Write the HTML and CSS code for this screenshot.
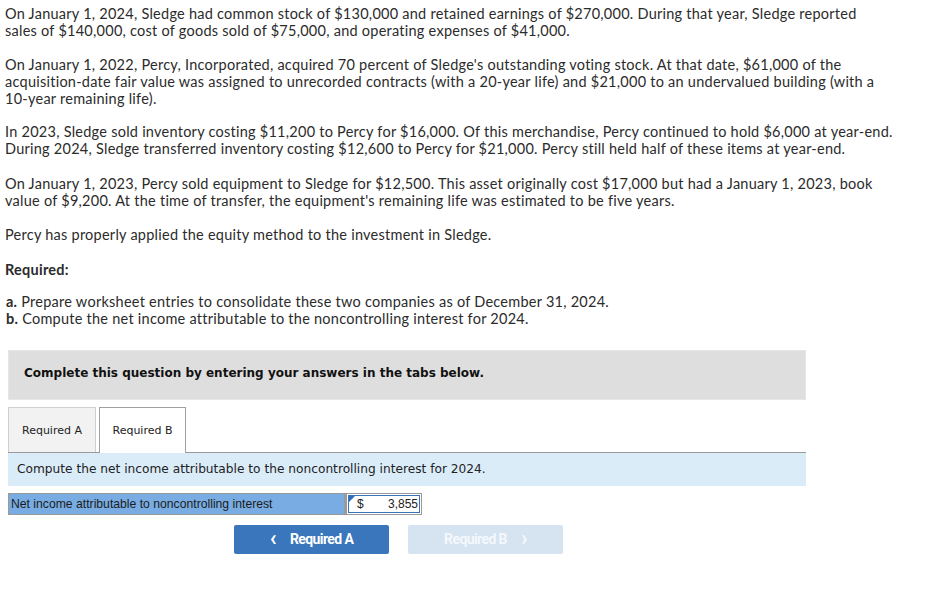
FILE: index.html
```html
<!DOCTYPE html>
<html>
<head>
<meta charset="utf-8">
<link rel="stylesheet" href="styles.css">
</head>
<body>
<div class="page">
  <p class="para p1">On January 1, 2024, Sledge had common stock of $130,000 and retained earnings of $270,000. During that year, Sledge reported<br>sales of $140,000, cost of goods sold of $75,000, and operating expenses of $41,000.</p>
  <p class="para p2">On January 1, 2022, Percy, Incorporated, acquired 70 percent of Sledge's outstanding voting stock. At that date, $61,000 of the acquisition-date fair value was assigned to unrecorded contracts (with a 20-year life) and $21,000 to an undervalued building (with a 10-year remaining life).</p>
  <p class="para p3">In 2023, Sledge sold inventory costing $11,200 to Percy for $16,000. Of this merchandise, Percy continued to hold $6,000 at year&#8209;end. During 2024, Sledge transferred inventory costing $12,600 to Percy for $21,000. Percy still held half of these items at year-end.</p>
  <p class="para p4">On January 1, 2023, Percy sold equipment to Sledge for $12,500. This asset originally cost $17,000 but had a January 1, 2023, book value of $9,200. At the time of transfer, the equipment's remaining life was estimated to be five years.</p>
  <p class="para p5">Percy has properly applied the equity method to the investment in Sledge.</p>
  <p class="para req-title">Required:</p>
  <div class="req-list">
    <div class="req-item"><b>a.</b> Prepare worksheet entries to consolidate these two companies as of December 31, 2024.</div>
    <div class="req-item"><b>b.</b> Compute the net income attributable to the noncontrolling interest for 2024.</div>
  </div>

  <div class="panel">
    <div class="notice">Complete this question by entering your answers in the tabs below.</div>
    <div class="tabs">
      <div class="tab">Required A</div>
      <div class="tab active">Required B</div>
    </div>
    <div class="instr">Compute the net income attributable to the noncontrolling interest for 2024.</div>
    <div class="answer-row">
      <div class="answer-label">Net income attributable to noncontrolling interest</div>
      <div class="answer-input">
        <span class="corner"></span>
        <span class="cur">$</span>
        <span class="val">3,855</span>
      </div>
    </div>
    <div class="nav">
      <div class="nav-btn prev"><span class="chev">&lsaquo;</span>Required A</div>
      <div class="nav-btn next disabled">Required B<span class="chev">&rsaquo;</span></div>
    </div>
  </div>
</div>
</body>
</html>
```

FILE: styles.css
```css
html, body {
  margin: 0;
  padding: 0;
  background: #ffffff;
}

.page {
  padding: 5px 0 0 5px;
  width: 888px;
  font-family: "Lato", "Open Sans", sans-serif;
  font-size: 14.5px;
  letter-spacing: 0.25px;
  line-height: 17px;
  color: #2b2b2b;
}

.para {
  margin: 0;
}
.p2 { margin-top: 17px; }
.p3 { margin-top: 16px; }
.p4 { margin-top: 18px; }
.p5 { margin-top: 17px; }
.req-title {
  margin-top: 18px;
  font-weight: bold;
}

.req-list {
  margin-top: 15px;
  padding-left: 1px;
}
.req-item b {
  font-weight: bold;
}

.panel {
  margin: 23px 0 0 3px;
  width: 798px;
  letter-spacing: normal;
}

.notice {
  background: #dedede;
  border: 1px solid #e6e6e6;
  display: flex;
  align-items: center;
  padding: 0 0 4px 15px;
  box-sizing: content-box;
  height: 44px;
  font-family: "DejaVu Sans", Verdana, sans-serif;
  font-weight: bold;
  font-size: 12px;
  color: #111;
}

.tabs {
  display: flex;
  gap: 3px;
  margin-top: 7px;
  align-items: flex-end;
}
.tab {
  box-sizing: border-box;
  border: 1px solid #cfcfcf;
  border-bottom: none;
  background: #f2f2f2;
  font-family: "DejaVu Sans", Verdana, sans-serif;
  font-size: 11px;
  color: #222;
  display: flex;
  align-items: center;
  justify-content: center;
  height: 45px;
  width: 88px;
}
.tab.active {
  background: #ffffff;
  border: 1px solid #a0a0a0;
  border-bottom: none;
  height: 46px;
  margin-bottom: -1px;
  position: relative;
  z-index: 1;
  width: 87px;
}

.instr {
  border-top: 1px solid #9a9a9a;
  background: #dbecf9;
  height: 33px;
  display: flex;
  align-items: center;
  padding-left: 9px;
  font-family: "DejaVu Sans", Verdana, sans-serif;
  font-size: 12.2px;
  color: #222;
}

.answer-row {
  margin-top: 7px;
  display: flex;
  height: 22px;
}
.answer-label {
  width: 338px;
  box-sizing: border-box;
  background: #78ace2;
  border: 1px solid #9a9a9a;
  border-right: 2px solid #9a9a9a;
  font-family: "Liberation Sans", Arial, sans-serif;
  font-size: 12.2px;
  color: #1c1c1c;
  display: flex;
  align-items: center;
  padding-left: 2px;
}
.answer-input {
  position: relative;
  width: 76px;
  box-sizing: border-box;
  border: 1px solid #9a9a9a;
  background: #fff;
  padding: 2px;
  display: flex;
}
.answer-input::before {
  content: "";
  position: absolute;
  inset: 1px;
  border: 1px solid #3b73b9;
  pointer-events: none;
}
.corner {
  position: absolute;
  left: 2px;
  top: 2px;
  width: 0;
  height: 0;
  border-top: 6px solid #2f6cc0;
  border-right: 6px solid transparent;
}
.cur, .val {
  font-family: "Liberation Sans", Arial, sans-serif;
  font-size: 12px;
  color: #222;
  display: flex;
  align-items: center;
}
.cur {
  margin-left: 8px;
}
.val {
  margin-left: auto;
  margin-right: 1px;
}

.nav {
  display: flex;
  gap: 19px;
  margin-top: 10px;
  padding-left: 226px;
}
.nav-btn {
  width: 155px;
  height: 29px;
  border-radius: 2px;
  background: #3a76bb;
  color: #ffffff;
  font-family: "Roboto", "Liberation Sans", sans-serif;
  font-weight: bold;
  font-size: 14px;
  letter-spacing: -0.6px;
  display: flex;
  align-items: center;
  justify-content: center;
  gap: 14px;
}
.nav-btn.disabled {
  background: #d6e3f1;
  color: #f4f8fc;
}
.chev {
  font-size: 22px;
  line-height: 20px;
  font-weight: bold;
  margin-top: -3px;
}
```
